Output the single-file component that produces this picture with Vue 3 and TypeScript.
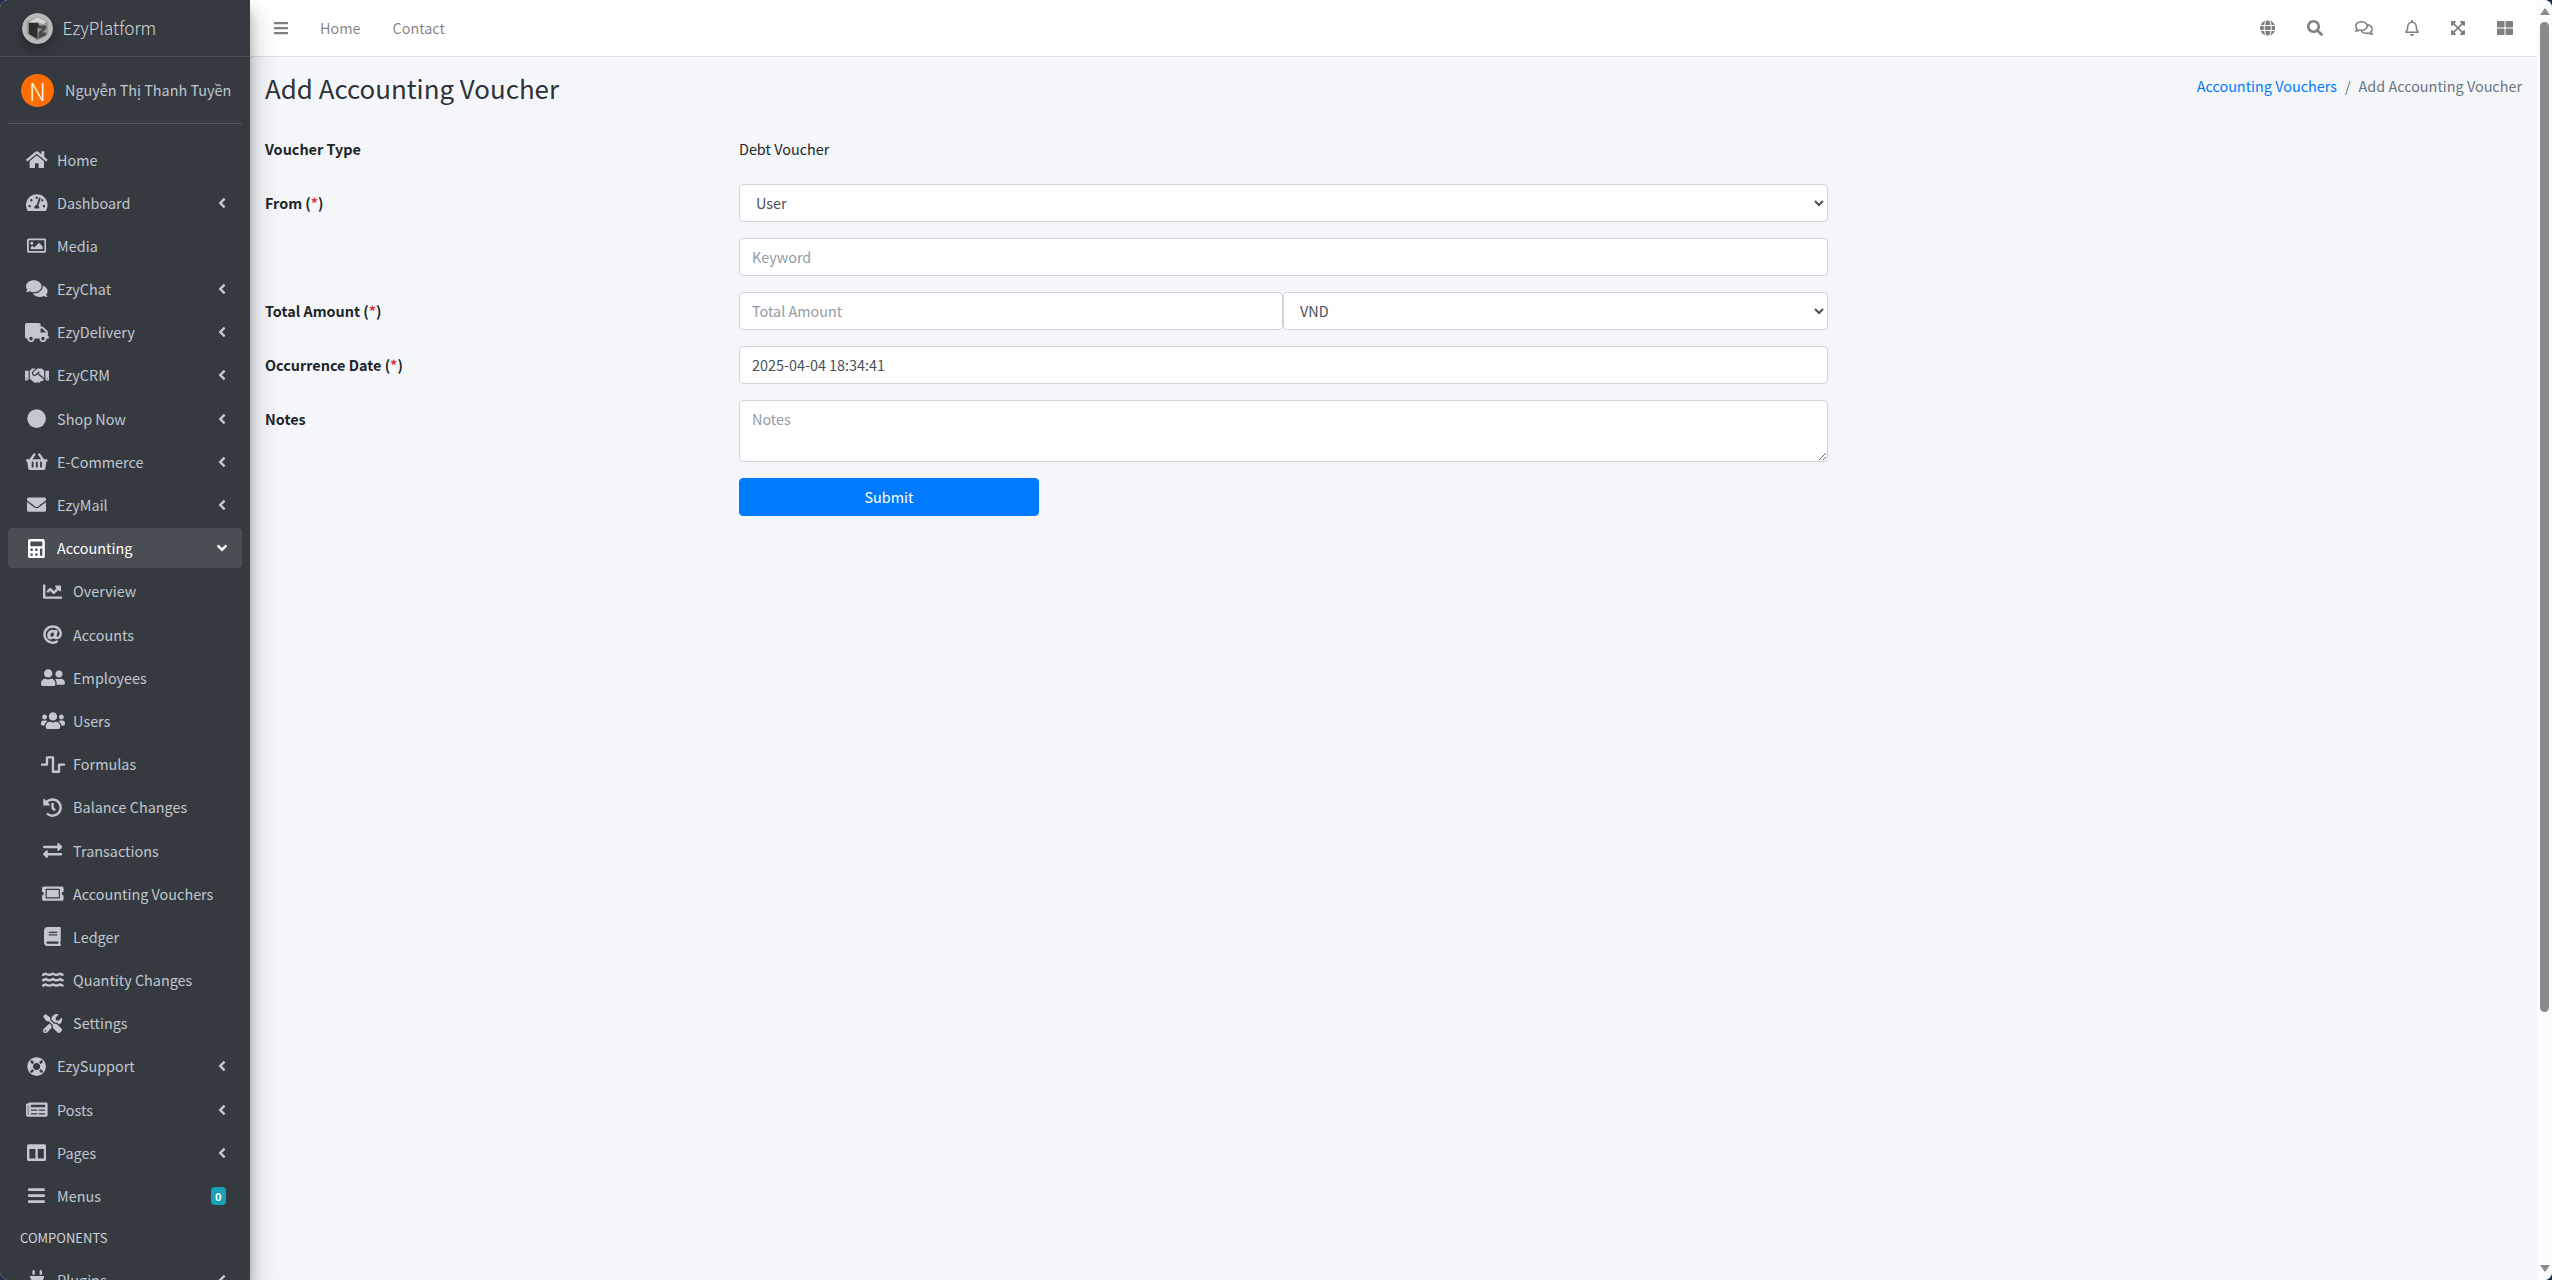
<script setup lang="ts">
type IconDef = { w: number; d: string };

// Icon shapes, drawn on a 512-high grid
const icons: Record<string, IconDef> = {
  home: { w: 576, d: "M280.37 148.26L96 300.11V464a16 16 0 0 0 16 16l112.06-.29a16 16 0 0 0 15.92-16V368a16 16 0 0 1 16-16h64a16 16 0 0 1 16 16v95.64a16 16 0 0 0 16 16.05L464 480a16 16 0 0 0 16-16V300L295.67 148.26a12.19 12.19 0 0 0-15.3 0zM571.6 251.47L488 182.56V44.05a12 12 0 0 0-12-12h-56a12 12 0 0 0-12 12v72.61L318.47 43a48 48 0 0 0-61 0L4.34 251.47a12 12 0 0 0-1.6 16.9l25.5 31A12 12 0 0 0 45.15 301l235.22-193.74a12.19 12.19 0 0 1 15.3 0L530.9 301a12 12 0 0 0 16.9-1.6l25.5-31a12 12 0 0 0-1.7-16.93z" },
  gauge: { w: 576, d: "M288 32C128.94 32 0 160.94 0 320c0 52.8 14.25 102.26 39.06 144.8 5.61 9.62 16.3 15.2 27.44 15.2h443c11.14 0 21.83-5.58 27.44-15.2C561.75 422.26 576 372.8 576 320c0-159.06-128.94-288-288-288zm0 64c14.71 0 26.58 10.13 30.32 23.65-1.11 2.26-2.64 4.23-3.45 6.67l-9.22 27.67c-5.13 3.49-10.97 6.01-17.64 6.01-17.67 0-32-14.33-32-32S270.33 96 288 96zM96 384c-17.67 0-32-14.33-32-32s14.33-32 32-32 32 14.33 32 32-14.33 32-32 32zm48-160c-17.67 0-32-14.33-32-32s14.33-32 32-32 32 14.33 32 32-14.33 32-32 32zm246.77-72.41l-61.33 184C343.13 347.33 352 364.54 352 384c0 11.72-3.38 22.55-8.88 32H232.88c-5.5-9.45-8.88-20.28-8.88-32 0-33.94 26.5-61.43 59.9-63.59l61.34-184.01c4.17-12.56 17.73-19.45 30.36-15.17 12.57 4.19 19.35 17.79 15.17 30.36zm14.66 57.2l15.52-46.55c3.47-1.29 7.13-2.23 11.05-2.23 17.67 0 32 14.33 32 32s-14.33 32-32 32c-11.38-.01-20.89-6.28-26.57-15.22zM480 384c-17.67 0-32-14.33-32-32s14.33-32 32-32 32 14.33 32 32-14.33 32-32 32z" },
  image: { w: 512, d: "M464 64H48C21.49 64 0 85.49 0 112v288c0 26.51 21.49 48 48 48h416c26.51 0 48-21.49 48-48V112c0-26.51-21.49-48-48-48zm-6 336H54a6 6 0 0 1-6-6V118a6 6 0 0 1 6-6h404a6 6 0 0 1 6 6v276a6 6 0 0 1-6 6zM128 152c-22.091 0-40 17.909-40 40s17.909 40 40 40 40-17.909 40-40-17.909-40-40-40zM96 352h320v-80l-87.515-87.515c-4.686-4.686-12.284-4.686-16.971 0L192 304l-39.515-39.515c-4.686-4.686-12.284-4.686-16.971 0L96 304v48z" },
  comments: { w: 576, d: "M416 192c0-88.4-93.1-160-208-160S0 103.6 0 192c0 34.3 14.1 65.9 38 92-13.4 30.2-35.5 54.2-35.8 54.5-2.2 2.3-2.8 5.7-1.5 8.7S4.8 352 8 352c36.6 0 66.9-12.3 88.7-25 32.2 15.7 70.3 25 111.3 25 114.9 0 208-71.6 208-160zm122 220c23.9-26 38-57.7 38-92 0-66.9-53.5-124.2-129.3-148.1.9 6.6 1.3 13.3 1.3 20.1 0 105.9-107.7 192-240 192-10.8 0-21.3-.8-31.7-1.9C207.8 439.6 281.8 480 368 480c41 0 79.1-9.2 111.3-25 21.8 12.7 52.1 25 88.7 25 3.2 0 6.1-1.9 7.3-4.8 1.3-2.9.7-6.3-1.5-8.7-.3-.3-22.4-24.2-35.8-54.5z" },
  truck: { w: 640, d: "M624 352h-16V243.9c0-12.7-5.1-24.9-14.1-33.9L494 110.1c-9-9-21.2-14.1-33.9-14.1H416V48c0-26.5-21.5-48-48-48H48C21.5 0 0 21.5 0 48v320c0 26.5 21.5 48 48 48h16c0 53 43 96 96 96s96-43 96-96h128c0 53 43 96 96 96s96-43 96-96h48c8.8 0 16-7.2 16-16v-32c0-8.8-7.2-16-16-16zM160 464c-26.5 0-48-21.5-48-48s21.5-48 48-48 48 21.5 48 48-21.5 48-48 48zm320 0c-26.5 0-48-21.5-48-48s21.5-48 48-48 48 21.5 48 48-21.5 48-48 48zm80-208H416V144h44.1l99.9 99.9V256z" },
  handshake: { w: 640, d: "M434.7 64h-85.9c-8 0-15.7 3-21.6 8.4l-98.3 90c-.1.1-.2.3-.3.4-16.6 15.6-16.3 40.5-2.1 56 12.7 13.9 39.4 17.6 56.1 2.7.1-.1.3-.1.4-.2l79.9-73.2c6.5-5.9 16.7-5.5 22.6 1 6 6.5 5.5 16.6-1 22.6l-26.1 23.9L504 313.8c2.9 2.4 5.5 5 7.9 7.7V128l-54.6-54.6c-5.9-6-14.1-9.4-22.6-9.4zM544 128.2v223.9c0 17.7 14.3 32 32 32h64V128.2h-96zm48 223.9c-8.8 0-16-7.2-16-16s7.2-16 16-16 16 7.2 16 16-7.2 16-16 16zM0 384h64c17.7 0 32-14.3 32-32V128.2H0V384zm48-63.9c8.8 0 16 7.2 16 16s-7.2 16-16 16-16-7.2-16-16c0-8.9 7.2-16 16-16zm435.9 18.6L334.6 217.5l-30 27.5c-29.7 27.1-75.2 24.5-101.7-4.4-26.9-29.4-24.8-74.9 4.4-101.7L289.1 64h-83.8c-8.5 0-16.6 3.4-22.6 9.4L128 128v223.9h18.3l90.5 81.9c27.4 22.3 67.7 18.1 90-9.3l.2-.2 17.9 15.5c15.9 13 39.4 10.5 52.3-5.4l31.4-38.6 5.4 4.4c13.7 11.1 33.9 9.1 45-4.7l9.5-11.7c11.2-13.8 9.1-33.9-4.6-45.1z" },
  circle: { w: 512, d: "M256 8a248 248 0 1 0 0 496 248 248 0 0 0 0-496z" },
  basket: { w: 576, d: "M576 216v16c0 13.255-10.745 24-24 24h-8l-26.113 182.788C514.509 462.435 494.257 480 470.37 480H105.63c-23.887 0-44.139-17.565-47.518-41.212L32 256h-8c-13.255 0-24-10.745-24-24v-16c0-13.255 10.745-24 24-24h67.341l106.78-146.821c10.395-14.292 30.407-17.453 44.701-7.058 14.293 10.395 17.453 30.408 7.058 44.701L170.477 192h235.046L326.12 82.821c-10.395-14.292-7.234-34.306 7.059-44.701 14.291-10.395 34.306-7.235 44.701 7.058L484.659 192H552c13.255 0 24 10.745 24 24zM312 392V280c0-13.255-10.745-24-24-24s-24 10.745-24 24v112c0 13.255 10.745 24 24 24s24-10.745 24-24zm112 0V280c0-13.255-10.745-24-24-24s-24 10.745-24 24v112c0 13.255 10.745 24 24 24s24-10.745 24-24zm-224 0V280c0-13.255-10.745-24-24-24s-24 10.745-24 24v112c0 13.255 10.745 24 24 24s24-10.745 24-24z" },
  envelope: { w: 512, d: "M502.3 190.8c3.9-3.1 9.7-.2 9.7 4.7V400c0 26.5-21.5 48-48 48H48c-26.5 0-48-21.5-48-48V195.6c0-5 5.7-7.8 9.7-4.7 22.4 17.4 52.1 39.5 154.1 113.6 21.1 15.4 56.7 47.8 92.2 47.6 35.7.3 72-32.8 92.3-47.6 102-74.1 131.6-96.3 154-113.7zM256 320c23.2.4 56.6-29.2 73.4-41.4 132.7-96.3 142.8-104.7 173.4-128.7 5.8-4.5 9.2-11.5 9.2-18.9v-19c0-26.5-21.5-48-48-48H48C21.5 64 0 85.5 0 112v19c0 7.4 3.4 14.3 9.2 18.9 30.6 23.9 40.7 32.4 173.4 128.7 16.8 12.2 50.2 41.8 73.4 41.4z" },
  calculator: { w: 448, d: "M400 0H48C22.4 0 0 22.4 0 48v416c0 25.6 22.4 48 48 48h352c25.6 0 48-22.4 48-48V48c0-25.6-22.4-48-48-48zM128 435.2c0 6.4-6.4 12.8-12.8 12.8H76.8c-6.4 0-12.8-6.4-12.8-12.8v-38.4c0-6.4 6.4-12.8 12.8-12.8h38.4c6.4 0 12.8 6.4 12.8 12.8v38.4zm0-128c0 6.4-6.4 12.8-12.8 12.8H76.8c-6.4 0-12.8-6.4-12.8-12.8v-38.4c0-6.4 6.4-12.8 12.8-12.8h38.4c6.4 0 12.8 6.4 12.8 12.8v38.4zm128 128c0 6.4-6.4 12.8-12.8 12.8h-38.4c-6.4 0-12.8-6.4-12.8-12.8v-38.4c0-6.4 6.4-12.8 12.8-12.8h38.4c6.4 0 12.8 6.4 12.8 12.8v38.4zm0-128c0 6.4-6.4 12.8-12.8 12.8h-38.4c-6.4 0-12.8-6.4-12.8-12.8v-38.4c0-6.4 6.4-12.8 12.8-12.8h38.4c6.4 0 12.8 6.4 12.8 12.8v38.4zm128 128c0 6.4-6.4 12.8-12.8 12.8h-38.4c-6.4 0-12.8-6.4-12.8-12.8V268.8c0-6.4 6.4-12.8 12.8-12.8h38.4c6.4 0 12.8 6.4 12.8 12.8v166.4zm0-256c0 6.4-6.4 12.8-12.8 12.8H76.8c-6.4 0-12.8-6.4-12.8-12.8V76.8C64 70.4 70.4 64 76.8 64h294.4c6.4 0 12.8 6.4 12.8 12.8v102.4z" },
  chart: { w: 512, d: "M496 384H64V80c0-8.84-7.16-16-16-16H16C7.16 64 0 71.16 0 80v336c0 17.67 14.33 32 32 32h464c8.84 0 16-7.16 16-16v-32c0-8.84-7.16-16-16-16zM464 96H345.94c-21.38 0-32.09 25.85-16.97 40.97l32.4 32.4L288 242.75l-73.37-73.37c-12.5-12.5-32.76-12.5-45.25 0l-68.69 68.69c-6.25 6.25-6.25 16.38 0 22.63l22.62 22.62c6.25 6.25 16.38 6.25 22.63 0L192 237.25l73.37 73.37c12.5 12.5 32.76 12.5 45.25 0l96-96 32.4 32.4c15.12 15.12 40.97 4.41 40.97-16.97V112c.01-8.84-7.15-16-15.99-16z" },
  at: { w: 512, d: "M256 8C118.941 8 8 118.919 8 256c0 137.059 110.919 248 248 248 48.154 0 95.342-14.14 135.408-40.223 12.005-7.815 14.625-24.288 5.552-35.372l-10.177-12.433c-7.671-9.371-21.179-11.667-31.373-5.129C325.92 429.757 291.314 440 256 440c-101.458 0-184-82.542-184-184S154.542 72 256 72c100.139 0 184 57.619 184 160 0 38.786-21.093 79.742-58.17 83.693-17.349-.454-16.91-12.857-13.476-30.024l23.433-121.11C394.653 149.75 383.308 136 368.225 136h-44.981a13.518 13.518 0 0 0-13.432 11.993l-.01.092c-14.697-17.901-40.448-21.775-59.971-21.775-74.58 0-137.831 62.234-137.831 151.46 0 65.303 36.785 105.87 96 105.87 26.984 0 57.369-15.637 74.991-38.333 9.522 34.104 40.613 34.103 70.71 34.103C462.609 379.41 504 307.798 504 232 504 95.653 394.023 8 256 8zm-21.68 304.43c-22.249 0-36.07-15.623-36.07-40.771 0-44.993 30.779-72.729 58.63-72.729 22.292 0 35.601 15.241 35.601 40.77 0 45.061-33.875 72.73-58.161 72.73z" },
  friends: { w: 640, d: "M192 256c61.9 0 112-50.1 112-112S253.9 32 192 32 80 82.1 80 144s50.1 112 112 112zm76.8 32h-8.3c-20.8 10-43.9 16-68.5 16s-47.6-6-68.5-16h-8.3C51.6 288 0 339.6 0 403.2V432c0 26.5 21.5 48 48 48h288c26.5 0 48-21.5 48-48v-28.8c0-63.6-51.6-115.2-115.2-115.2zM480 256c53 0 96-43 96-96s-43-96-96-96-96 43-96 96 43 96 96 96zm48 32h-3.8c-13.9 4.8-28.6 8-44.2 8s-30.3-3.2-44.2-8H432c-20.4 0-39.2 5.9-55.7 15.4 24.4 26.3 39.7 61.2 39.7 99.8v38.4c0 2.2-.5 4.3-.6 6.4H592c26.5 0 48-21.5 48-48 0-61.9-50.1-112-112-112z" },
  users: { w: 640, d: "M96 224c35.3 0 64-28.7 64-64s-28.7-64-64-64-64 28.7-64 64 28.7 64 64 64zm448 0c35.3 0 64-28.7 64-64s-28.7-64-64-64-64 28.7-64 64 28.7 64 64 64zm32 32h-64c-17.6 0-33.5 7.1-45.1 18.6 40.3 22.1 68.9 62 75.1 109.4h66c17.7 0 32-14.3 32-32v-32c0-35.3-28.7-64-64-64zm-256 0c61.9 0 112-50.1 112-112S381.9 32 320 32 208 82.1 208 144s50.1 112 112 112zm76.8 32h-8.3c-20.8 10-43.9 16-68.5 16s-47.6-6-68.5-16h-8.3C179.6 288 128 339.6 128 403.2V432c0 26.5 21.5 48 48 48h288c26.5 0 48-21.5 48-48v-28.8c0-63.6-51.6-115.2-115.2-115.2zm-223.7-13.4C161.5 263.1 145.6 256 128 256H64c-35.3 0-64 28.7-64 64v32c0 17.7 14.3 32 32 32h65.9c6.3-47.4 34.9-87.3 75.2-109.4z" },
  wave: { w: 640, d: "M476 480H324a36 36 0 0 1-36-36V96h-96v156a36 36 0 0 1-36 36H16a16 16 0 0 1-16-16v-32a16 16 0 0 1 16-16h112V68a36 36 0 0 1 36-36h152a36 36 0 0 1 36 36v348h96V260a36 36 0 0 1 36-36h140a16 16 0 0 1 16 16v32a16 16 0 0 1-16 16H512v156a36 36 0 0 1-36 36z" },
  history: { w: 512, d: "M504 255.531c.253 136.64-111.18 248.372-247.82 248.468-59.015.042-113.223-20.53-155.822-54.911-11.077-8.94-11.905-25.541-1.839-35.607l11.267-11.267c8.609-8.609 22.353-9.551 31.891-1.984C173.062 425.135 212.781 440 256 440c101.705 0 184-82.311 184-184 0-101.705-82.311-184-184-184-48.814 0-93.149 18.969-126.068 49.932l50.754 50.754c10.08 10.08 2.941 27.314-11.313 27.314H24c-8.837 0-16-7.163-16-16V38.627c0-14.254 17.234-21.393 27.314-11.314l49.372 49.372C129.209 34.136 189.552 8 256 8c136.81 0 247.747 110.78 248 247.531zm-180.912 78.784l9.823-12.63c8.138-10.463 6.253-25.542-4.21-33.679L288 256.349V152c0-13.255-10.745-24-24-24h-16c-13.255 0-24 10.745-24 24v135.651l65.409 50.874c10.463 8.137 25.541 6.253 33.679-4.21z" },
  exchange: { w: 512, d: "M0 168v-16c0-13.255 10.745-24 24-24h360V80c0-21.367 25.899-32.042 40.971-16.971l80 80c9.372 9.373 9.372 24.569 0 33.941l-80 80C409.956 271.982 384 261.456 384 240v-48H24c-13.255 0-24-10.745-24-24zm488 152H128v-48c0-21.314-25.862-32.08-40.971-16.971l-80 80c-9.372 9.373-9.372 24.569 0 33.941l80 80C102.057 463.997 128 453.437 128 432v-48h360c13.255 0 24-10.745 24-24v-16c0-13.255-10.745-24-24-24z" },
  ticket: { w: 576, d: "M128 160h320v192H128V160zm400 96c0 26.51 21.49 48 48 48v96c0 26.51-21.49 48-48 48H48c-26.51 0-48-21.49-48-48v-96c26.51 0 48-21.49 48-48s-21.49-48-48-48v-96c0-26.51 21.49-48 48-48h480c26.51 0 48 21.49 48 48v96c-26.51 0-48 21.49-48 48zm-48-104c0-13.255-10.745-24-24-24H120c-13.255 0-24 10.745-24 24v208c0 13.255 10.745 24 24 24h336c13.255 0 24-10.745 24-24V152z" },
  book: { w: 448, d: "M448 360V24c0-13.3-10.7-24-24-24H96C43 0 0 43 0 96v320c0 53 43 96 96 96h328c13.3 0 24-10.7 24-24v-16c0-7.5-3.5-14.3-8.9-18.7-4.2-15.4-4.2-59.3 0-74.7 5.4-4.3 8.9-11.1 8.9-18.6zM128 134c0-3.3 2.7-6 6-6h212c3.3 0 6 2.7 6 6v20c0 3.3-2.7 6-6 6H134c-3.3 0-6-2.7-6-6v-20zm0 64c0-3.3 2.7-6 6-6h212c3.3 0 6 2.7 6 6v20c0 3.3-2.7 6-6 6H134c-3.3 0-6-2.7-6-6v-20zm253.4 250H96c-17.7 0-32-14.3-32-32 0-17.6 14.4-32 32-32h285.4c-1.9 17.1-1.9 46.9 0 64z" },
  water: { w: 576, d: "M562.1 383.9c-21.5-2.4-42.1-10.5-57.9-22.9-14.1-11.1-34.2-11.3-48.2 0-37.9 30.4-107.2 30.4-145.7-1.5-13.5-11.2-33-9.1-46.7 1.8-38 30.1-106.9 30-145.2-1.7-13.5-11.2-33.3-8.9-47.1 2-15.5 12.2-36 20.1-57.7 22.4-7.9.8-13.6 7.9-13.6 15.7v32.2c0 9.1 7.6 16.8 16.7 16 28.8-2.5 56.1-11.4 79.4-25.9 56.5 34.6 137 34.1 192 0 56.5 34.6 137 34.1 192 0 23.3 14.2 50.9 23.3 79.1 25.8 9.1.8 16.7-6.9 16.7-16v-31.6c.1-8-5.7-15.4-13.8-16.3zm0-144c-21.5-2.4-42.1-10.5-57.9-22.9-14.1-11.1-34.2-11.3-48.2 0-37.9 30.4-107.2 30.4-145.7-1.5-13.5-11.2-33-9.1-46.7 1.8-38 30.1-106.9 30-145.2-1.7-13.5-11.2-33.3-8.9-47.1 2-15.5 12.2-36 20.1-57.7 22.4-7.9.8-13.6 7.9-13.6 15.7v32.2c0 9.1 7.6 16.8 16.7 16 28.8-2.5 56.1-11.4 79.4-25.9 56.5 34.6 137 34.1 192 0 56.5 34.6 137 34.1 192 0 23.3 14.2 50.9 23.3 79.1 25.8 9.1.8 16.7-6.9 16.7-16v-31.6c.1-8-5.7-15.4-13.8-16.3zm0-144C540.6 93.4 520 85.4 504.2 73 490.1 61.9 470 61.7 456 73c-37.9 30.4-107.2 30.4-145.7-1.5-13.5-11.2-33-9.1-46.7 1.8-38 30.1-106.9 30-145.2-1.7-13.5-11.2-33.3-8.9-47.1 2-15.5 12.2-36 20.1-57.7 22.4-7.9.8-13.6 7.9-13.6 15.7v32.2c0 9.1 7.6 16.8 16.7 16 28.8-2.5 56.1-11.4 79.4-25.9 56.5 34.6 137 34.1 192 0 56.5 34.6 137 34.1 192 0 23.3 14.2 50.9 23.3 79.1 25.8 9.1.8 16.7-6.9 16.7-16v-31.6c.1-8-5.7-15.4-13.8-16.3z" },
  tools: { w: 512, d: "M501.1 395.7L384 278.6c-23.1-23.1-57.6-27.6-85.4-13.9L192 158.1V96L64 0 0 64l96 128h62.1l106.6 106.6c-13.6 27.8-9.2 62.3 13.9 85.4l117.1 117.1c14.6 14.6 38.2 14.6 52.7 0l52.7-52.7c14.5-14.6 14.5-38.2 0-52.7zM331.7 225c28.3 0 54.9 11 74.9 31l19.4 19.4c15.8-6.9 30.8-16.5 43.8-29.5 37.1-37.1 49.7-89.3 37.9-136.7-2.2-9-13.5-12.1-20.1-5.5l-74.4 74.4-67.9-11.3L334 98.9l74.4-74.4c6.6-6.6 3.4-17.9-5.7-20.2-47.4-11.7-99.6.9-136.6 37.9-28.5 28.5-41.9 66.1-41.2 103.6l82.1 82.1c8.1-1.9 16.5-2.9 24.7-2.9zm-103.9 82l-56.7-56.7L18.7 402.8c-25 25-25 65.5 0 90.5s65.5 25 90.5 0l123.6-123.6c-7.6-19.9-9.9-41.6-5-62.7zM64 472c-13.2 0-24-10.8-24-24 0-13.3 10.7-24 24-24s24 10.7 24 24c0 13.2-10.7 24-24 24z" },
  lifering: { w: 512, d: "M256 8C119.033 8 8 119.033 8 256s111.033 248 248 248 248-111.033 248-248S392.967 8 256 8zm173.696 119.559l-63.399 63.399c-10.987-18.559-26.67-34.252-45.255-45.255l63.399-63.399a218.396 218.396 0 0 1 45.255 45.255zM256 352c-53.019 0-96-42.981-96-96s42.981-96 96-96 96 42.981 96 96-42.981 96-96 96zM127.559 82.304l63.399 63.399c-18.559 10.987-34.252 26.67-45.255 45.255l-63.399-63.399a218.372 218.372 0 0 1 45.255-45.255zM82.304 384.441l63.399-63.399c10.987 18.559 26.67 34.252 45.255 45.255l-63.399 63.399a218.396 218.396 0 0 1-45.255-45.255zm302.137 45.255l-63.399-63.399c18.559-10.987 34.252-26.67 45.255-45.255l63.399 63.399a218.403 218.403 0 0 1-45.255 45.255z" },
  newspaper: { w: 576, d: "M552 64H88c-13.255 0-24 10.745-24 24v8H24c-13.255 0-24 10.745-24 24v272c0 30.928 25.072 56 56 56h472c26.51 0 48-21.49 48-48V88c0-13.255-10.745-24-24-24zM56 400a8 8 0 0 1-8-8V144h16v248a8 8 0 0 1-8 8zm236-16H140c-6.627 0-12-5.373-12-12v-8c0-6.627 5.373-12 12-12h152c6.627 0 12 5.373 12 12v8c0 6.627-5.373 12-12 12zm208 0H348c-6.627 0-12-5.373-12-12v-8c0-6.627 5.373-12 12-12h152c6.627 0 12 5.373 12 12v8c0 6.627-5.373 12-12 12zm-208-96H140c-6.627 0-12-5.373-12-12v-8c0-6.627 5.373-12 12-12h152c6.627 0 12 5.373 12 12v8c0 6.627-5.373 12-12 12zm208 0H348c-6.627 0-12-5.373-12-12v-8c0-6.627 5.373-12 12-12h152c6.627 0 12 5.373 12 12v8c0 6.627-5.373 12-12 12zm0-96H140c-6.627 0-12-5.373-12-12v-40c0-6.627 5.373-12 12-12h360c6.627 0 12 5.373 12 12v40c0 6.627-5.373 12-12 12z" },
  columns: { w: 512, d: "M464 32H48C21.49 32 0 53.49 0 80v352c0 26.51 21.49 48 48 48h416c26.51 0 48-21.49 48-48V80c0-26.51-21.49-48-48-48zM224 416H64V160h160v256zm224 0H288V160h160v256z" },
  bars: { w: 448, d: "M16 132h416c8.837 0 16-7.163 16-16V76c0-8.837-7.163-16-16-16H16C7.163 60 0 67.163 0 76v40c0 8.837 7.163 16 16 16zm0 160h416c8.837 0 16-7.163 16-16v-40c0-8.837-7.163-16-16-16H16c-8.837 0-16 7.163-16 16v40c0 8.837 7.163 16 16 16zm0 160h416c8.837 0 16-7.163 16-16v-40c0-8.837-7.163-16-16-16H16c-8.837 0-16 7.163-16 16v40c0 8.837 7.163 16 16 16z" },
  plug: { w: 384, d: "M320 32a32 32 0 0 0-64 0v96h64zm48 128H16a16 16 0 0 0-16 16v32a16 16 0 0 0 16 16h16v32a160.07 160.07 0 0 0 128 156.8V512h64v-99.2A160.07 160.07 0 0 0 352 256v-32h16a16 16 0 0 0 16-16v-32a16 16 0 0 0-16-16zM128 32a32 32 0 0 0-64 0v96h64z" },
  angle: { w: 256, d: "M31.7 239l136-136c9.4-9.4 24.6-9.4 33.9 0l22.6 22.6c9.4 9.4 9.4 24.6 0 33.9L127.9 256l96.4 96.4c9.4 9.4 9.4 24.6 0 33.9L201.7 409c-9.4 9.4-24.6 9.4-33.9 0l-136-136c-9.5-9.4-9.5-24.6-.1-34z" },
  globe: { w: 496, d: "M336.5 160C322 70.7 287.8 8 248 8s-74 62.7-88.5 152h177zM152 256c0 22.2 1.2 43.5 3.3 64h185.3c2.1-20.5 3.3-41.8 3.3-64s-1.2-43.5-3.3-64H155.3c-2.1 20.5-3.3 41.8-3.3 64zm324.7-96c-28.6-67.9-86.5-120.4-158-141.6 24.4 33.8 41.2 84.7 50 141.6h108zM177.2 18.4C105.8 39.6 47.8 92.1 19.3 160h108c8.7-56.9 25.5-107.8 49.9-141.6zM487.4 192H372.7c2.1 21 3.3 42.5 3.3 64s-1.2 43-3.3 64h114.6c5.5-20.5 8.6-41.8 8.6-64s-3.1-43.5-8.5-64zM120 256c0-21.5 1.2-43 3.3-64H8.6C3.2 212.5 0 233.8 0 256s3.2 43.5 8.6 64h114.6c-2-21-3.2-42.5-3.2-64zm39.5 96c14.5 89.3 48.7 152 88.5 152s74-62.7 88.5-152h-177zm159.3 141.6c71.4-21.2 129.4-73.7 158-141.6h-108c-8.8 56.9-25.6 107.8-50 141.6zM19.3 352c28.6 67.9 86.5 120.4 158 141.6-24.4-33.8-41.2-84.7-50-141.6h-108z" },
  search: { w: 512, d: "M505 442.7L405.3 343c-4.5-4.5-10.6-7-17-7H372c27.6-35.3 44-79.7 44-128C416 93.1 322.9 0 208 0S0 93.1 0 208s93.1 208 208 208c48.3 0 92.7-16.4 128-44v16.3c0 6.4 2.5 12.5 7 17l99.7 99.7c9.4 9.4 24.6 9.4 33.9 0l28.3-28.3c9.4-9.4 9.4-24.6.1-34zM208 336c-70.7 0-128-57.2-128-128 0-70.7 57.2-128 128-128 70.7 0 128 57.2 128 128 0 70.7-57.2 128-128 128z" },
  commentsO: { w: 576, d: "M532 386.2c27.5-27.1 44-61.1 44-98.2 0-80-76.5-146.1-176.2-157.9C368.3 72.5 294.3 32 208 32 93.1 32 0 103.6 0 192c0 37 16.5 71 44 98.2-15.3 30.7-37.3 54.5-37.7 54.9-6.3 6.7-8.1 16.5-4.4 25 3.6 8.5 12 14 21.2 14 53.5 0 96.7-20.2 125.2-38.8 9.2 2.1 18.7 3.7 28.4 4.9C208.1 407.6 281.8 448 368 448c20.8 0 40.8-2.4 59.8-6.8C456.3 459.7 499.4 480 553 480c9.2 0 17.5-5.5 21.2-14 3.6-8.5 1.9-18.3-4.4-25-.4-.3-22.5-24.1-37.8-54.8zm-392.8-92.3L122.1 305c-14.1 9.1-28.5 16.3-43.1 21.4 2.7-4.7 5.4-9.7 8-14.8l15.5-31.1L77.7 256C64.2 242.6 48 220.7 48 192c0-60.7 73.3-112 160-112s160 51.3 160 112-73.3 112-160 112c-16.5 0-33-1.9-49-5.6l-19.8-4.5zM498.3 352l-24.7 24.4 15.5 31.1c2.6 5.1 5.3 10.1 8 14.8-14.6-5.1-29-12.3-43.1-21.4l-17.1-11.1-19.9 4.6c-16 3.7-32.5 5.6-49 5.6-54 0-102.2-20.1-131.3-49.7C338 339.5 416 272.9 416 192c0-3.4-.4-6.7-.7-10C479.7 196.5 528 238.8 528 288c0 28.7-16.2 50.6-29.7 64z" },
  bell: { w: 448, d: "M439.39 362.29c-19.32-20.76-55.47-51.99-55.47-154.29 0-77.7-54.48-139.9-127.94-155.16V32c0-17.67-14.32-32-31.98-32s-31.98 14.33-31.98 32v20.84C118.56 68.1 64.08 130.3 64.08 208c0 102.3-36.15 133.53-55.47 154.29-6 6.45-8.66 14.16-8.61 21.71.11 16.4 12.98 32 32.1 32h383.8c19.12 0 32-15.6 32.1-32 .05-7.55-2.61-15.27-8.61-21.71zM67.53 368c21.22-27.97 44.42-74.33 44.53-159.42 0-.2-.06-.38-.06-.58 0-61.86 50.14-112 112-112s112 50.14 112 112c0 .2-.06.38-.06.58.11 85.1 23.31 131.46 44.53 159.42H67.53zM224 512c35.32 0 63.97-28.65 63.97-64H160.03c0 35.35 28.65 64 63.97 64z" },
  expand: { w: 448, d: "M448 344v112a23.94 23.94 0 0 1-24 24H312c-21.39 0-32.09-25.9-17-41l36.2-36.2L224 295.6 116.77 402.9 153 439c15.09 15.1 4.39 41-17 41H24a23.94 23.94 0 0 1-24-24V344c0-21.4 25.89-32.1 41-17l36.19 36.2L184.46 256 77.18 148.7 41 185c-15.1 15.1-41 4.4-41-17V56a23.94 23.94 0 0 1 24-24h112c21.39 0 32.09 25.9 17 41l-36.2 36.2L224 216.4l107.23-107.3L295 73c-15.09-15.1-4.39-41 17-41h112a23.94 23.94 0 0 1 24 24v112c0 21.4-25.89 32.1-41 17l-36.19-36.2L263.54 256l107.28 107.3L407 327.1c15.1-15.2 41-4.5 41 16.9z" },
  thLarge: { w: 512, d: "M296 32h192c13.255 0 24 10.745 24 24v160c0 13.255-10.745 24-24 24H296c-13.255 0-24-10.745-24-24V56c0-13.255 10.745-24 24-24zm-80 0H24C10.745 32 0 42.745 0 56v160c0 13.255 10.745 24 24 24h192c13.255 0 24-10.745 24-24V56c0-13.255-10.745-24-24-24zM0 296v160c0 13.255 10.745 24 24 24h192c13.255 0 24-10.745 24-24V296c0-13.255-10.745-24-24-24H24c-13.255 0-24 10.745-24 24zm296 184h192c13.255 0 24-10.745 24-24V296c0-13.255-10.745-24-24-24H296c-13.255 0-24 10.745-24 24v160c0 13.255 10.745 24 24 24z" },
};

type NavRow = {
  label: string;
  icon?: string;
  arrow?: boolean;
  open?: boolean;
  sub?: boolean;
  badge?: string;
  header?: boolean;
};

const nav: NavRow[] = [
  { label: "Home", icon: "home" },
  { label: "Dashboard", icon: "gauge", arrow: true },
  { label: "Media", icon: "image" },
  { label: "EzyChat", icon: "comments", arrow: true },
  { label: "EzyDelivery", icon: "truck", arrow: true },
  { label: "EzyCRM", icon: "handshake", arrow: true },
  { label: "Shop Now", icon: "circle", arrow: true },
  { label: "E-Commerce", icon: "basket", arrow: true },
  { label: "EzyMail", icon: "envelope", arrow: true },
  { label: "Accounting", icon: "calculator", arrow: true, open: true },
  { label: "Overview", icon: "chart", sub: true },
  { label: "Accounts", icon: "at", sub: true },
  { label: "Employees", icon: "friends", sub: true },
  { label: "Users", icon: "users", sub: true },
  { label: "Formulas", icon: "wave", sub: true },
  { label: "Balance Changes", icon: "history", sub: true },
  { label: "Transactions", icon: "exchange", sub: true },
  { label: "Accounting Vouchers", icon: "ticket", sub: true },
  { label: "Ledger", icon: "book", sub: true },
  { label: "Quantity Changes", icon: "water", sub: true },
  { label: "Settings", icon: "tools", sub: true },
  { label: "EzySupport", icon: "lifering", arrow: true },
  { label: "Posts", icon: "newspaper", arrow: true },
  { label: "Pages", icon: "columns", arrow: true },
  { label: "Menus", icon: "bars", badge: "0" },
  { label: "COMPONENTS", header: true },
  { label: "Plugins", icon: "plug", arrow: true },
];

const topIcons = ["globe", "search", "commentsO", "bell", "expand", "thLarge"];

const viewBox = (name: string) => `0 0 ${icons[name].w} 512`;
</script>

<template>
  <div class="app">
    <aside class="sidebar">
      <div class="brand">
        <svg class="logo" viewBox="0 0 32 32">
          <circle cx="16" cy="16" r="16" fill="#b9b9b9" />
          <path d="M16 3.5l11 5.5v13l-11 6.5L5 22V9z" fill="#9a9a9a" />
          <path d="M16 4.5l9.5 4.5-4 2.5L16 9l-6 2.5-3-2z" fill="#d6d6d6" />
          <path d="M7 10l9 0 2 3-2 3v11l-9-5.5z" fill="#2e2e2f" />
          <path d="M17 13h8v3l-4 4h4v3l-8 3.5V20l4-4h-4z" fill="#4a4a4b" />
        </svg>
        <span class="brand-text">EzyPlatform</span>
      </div>
      <div class="user-panel">
        <span class="avatar">N</span>
        <span class="user-name">Nguyễn Thị Thanh Tuyền</span>
      </div>
      <nav class="nav">
        <template v-for="row in nav" :key="row.label">
          <div v-if="row.header" class="nav-header">{{ row.label }}</div>
          <a
            v-else
            class="nav-link"
            :class="{ 'is-active': row.open, 'is-sub': row.sub }"
          >
            <span class="nav-icon">
              <svg :viewBox="viewBox(row.icon!)"><path :d="icons[row.icon!].d" fill="currentColor" /></svg>
            </span>
            <span class="nav-label">{{ row.label }}</span>
            <svg v-if="row.arrow" class="nav-arrow" :class="{ open: row.open }" :viewBox="viewBox('angle')">
              <path :d="icons.angle.d" fill="currentColor" />
            </svg>
            <span v-if="row.badge" class="nav-badge">{{ row.badge }}</span>
          </a>
        </template>
      </nav>
    </aside>

    <div class="main">
      <header class="topbar">
        <a class="top-link top-icon">
          <svg :viewBox="viewBox('bars')"><path :d="icons.bars.d" fill="currentColor" /></svg>
        </a>
        <a class="top-link">Home</a>
        <a class="top-link">Contact</a>
        <div class="top-right">
          <a v-for="name in topIcons" :key="name" class="top-link top-icon">
            <svg :viewBox="viewBox(name)"><path :d="icons[name].d" fill="currentColor" /></svg>
          </a>
        </div>
      </header>

      <div class="page-head">
        <h1>Add Accounting Voucher</h1>
        <div class="crumbs">
          <a>Accounting Vouchers</a>
          <span class="crumb-sep">/</span>
          <span class="crumb-now">Add Accounting Voucher</span>
        </div>
      </div>

      <form class="form">
        <label class="form-label">Voucher Type</label>
        <div class="static-value">Debt Voucher</div>

        <label class="form-label">From (<span class="req">*</span>)</label>
        <select class="control"><option>User</option></select>

        <span></span>
        <input class="control" placeholder="Keyword" />

        <label class="form-label">Total Amount (<span class="req">*</span>)</label>
        <div class="pair">
          <input class="control" placeholder="Total Amount" />
          <select class="control"><option>VND</option></select>
        </div>

        <label class="form-label">Occurrence Date (<span class="req">*</span>)</label>
        <input class="control" value="2025-04-04 18:34:41" />

        <label class="form-label">Notes</label>
        <textarea class="control area" placeholder="Notes"></textarea>

        <span></span>
        <div><button class="submit" type="button">Submit</button></div>
      </form>
    </div>

    <div class="scrollbar">
      <span class="arrow-up"></span>
      <span class="thumb"></span>
      <span class="arrow-down"></span>
    </div>
  </div>
</template>

<style scoped>
.app {
  --ui-font: "Noto Sans CJK SC", "Noto Sans", sans-serif;
  display: flex;
  width: 2552px;
  height: 1280px;
  overflow: hidden;
  border-radius: 8px;
  background: #f4f6f9;
  font-family: var(--ui-font);
  font-size: 14.4px;
  line-height: 24px;
  color: #212529;
}

/* sidebar */
.sidebar {
  position: relative;
  z-index: 2;
  flex: 0 0 250px;
  background: #343a40;
  box-shadow: 0 14px 28px rgba(0, 0, 0, 0.25), 0 10px 10px rgba(0, 0, 0, 0.22);
  overflow: hidden;
}
.brand {
  display: flex;
  align-items: center;
  height: 57px;
  box-sizing: border-box;
  padding-left: 22px;
  border-bottom: 1px solid #4b545c;
}
.logo {
  width: 31px;
  height: 31px;
  margin-right: 9.5px;
  border-radius: 50%;
  box-shadow: 0 6px 12px rgba(0, 0, 0, 0.3);
}
.brand-text {
  font-size: 17.3px;
  font-weight: 300;
  color: rgba(255, 255, 255, 0.8);
}
.user-panel {
  display: flex;
  align-items: center;
  height: 67px;
  box-sizing: border-box;
  margin: 0 8px;
  padding-left: 13px;
  border-bottom: 1px solid #4f5962;
}
.avatar {
  flex: 0 0 33px;
  height: 33px;
  margin-right: 11px;
  border-radius: 50%;
  background: #ff6d00;
  color: #fff;
  font-size: 24px;
  font-weight: 300;
  line-height: 33px;
  text-align: center;
}
.user-name {
  color: #c2c7d0;
  white-space: nowrap;
}
.nav {
  display: flex;
  flex-direction: column;
  gap: 3.2px;
  padding: 15.5px 8px 0;
}
.nav-link {
  display: flex;
  align-items: center;
  height: 40px;
  flex: none;
  box-sizing: border-box;
  padding: 0 16px;
  border-radius: 4px;
  color: #c2c7d0;
}
.nav-link.is-active {
  background: rgba(255, 255, 255, 0.1);
  color: #fff;
}
.nav-link.is-sub {
  padding-left: 32px;
}
.nav-icon {
  display: flex;
  justify-content: center;
  flex: 0 0 25.6px;
  margin-right: 7.5px;
}
.nav-icon svg {
  height: 19.2px;
}
.nav-arrow {
  height: 16px;
  margin-left: auto;
}
.nav-arrow.open {
  transform: rotate(-90deg);
}
.nav-badge {
  margin-left: auto;
  padding: 0 4.5px;
  border-radius: 4px;
  background: #17a2b8;
  color: #fff;
  font-size: 11px;
  font-weight: 700;
  line-height: 18px;
}
.nav-header {
  padding: 8px 12px;
  font-size: 13px;
  line-height: 21.6px;
  color: #d0d4db;
}

/* header and content */
.main {
  flex: 1;
  min-width: 0;
}
.topbar {
  display: flex;
  align-items: center;
  height: 57px;
  box-sizing: border-box;
  padding: 0 8px;
  background: #fff;
  border-bottom: 1px solid #dee2e6;
}
.top-right {
  display: flex;
  margin-left: auto;
}
.top-link {
  display: flex;
  align-items: center;
  padding: 8px 16px;
  color: rgba(0, 0, 0, 0.5);
}
.top-icon svg {
  height: 16px;
  display: block;
}
.page-head {
  display: flex;
  justify-content: space-between;
  align-items: center;
  padding: 13.5px 15px 24.9px;
}
h1 {
  margin: 0;
  font-size: 25.9px;
  font-weight: 400;
  line-height: 34.6px;
  color: #2d3339;
}
.crumbs {
  display: flex;
  margin-top: -4px;
}
.crumbs a {
  color: #007bff;
}
.crumb-sep {
  padding: 0 8px;
  color: #6c757d;
}
.crumb-now {
  color: #6c757d;
}
.form {
  display: grid;
  grid-template-columns: 474px 1089px;
  row-gap: 16px;
  padding-left: 15px;
}
.form-label {
  padding-top: 7px;
  font-weight: 700;
}
.static-value {
  padding-top: 7px;
  min-height: 38px;
  box-sizing: border-box;
}
.req {
  color: #dc3545;
}
.control {
  display: block;
  width: 100%;
  height: 38px;
  box-sizing: border-box;
  padding: 6px 12px;
  border: 1px solid #ced4da;
  border-radius: 4px;
  background: #fff;
  font-family: var(--ui-font);
  font-size: 14.4px;
  line-height: 24px;
  color: #495057;
  outline: none;
}
.control::placeholder {
  color: #939ba2;
  opacity: 1;
}
.area {
  height: 62px;
}
.pair {
  display: grid;
  grid-template-columns: 544px 1fr;
}
.submit {
  display: block;
  width: 300px;
  height: 38px;
  border: 1px solid #007bff;
  border-radius: 4px;
  background: #007bff;
  color: #fff;
  font-family: var(--ui-font);
  font-size: 14.4px;
  line-height: 24px;
}

/* page scrollbar */
.scrollbar {
  display: flex;
  flex: 0 0 15px;
  flex-direction: column;
  align-items: center;
  background: #fcfcfc;
}
.arrow-up {
  margin-top: 8px;
  border: 5px solid transparent;
  border-top: 0;
  border-bottom: 7px solid #8a8a8a;
}
.thumb {
  width: 9px;
  height: 990px;
  margin-top: 7px;
  border-radius: 5px;
  background: #8a8a8a;
}
.arrow-down {
  margin-top: 253px;
  border: 5px solid transparent;
  border-bottom: 0;
  border-top: 7px solid #8a8a8a;
}
</style>

<style>
html,
body {
  background: #1c2d4a;
}
</style>
